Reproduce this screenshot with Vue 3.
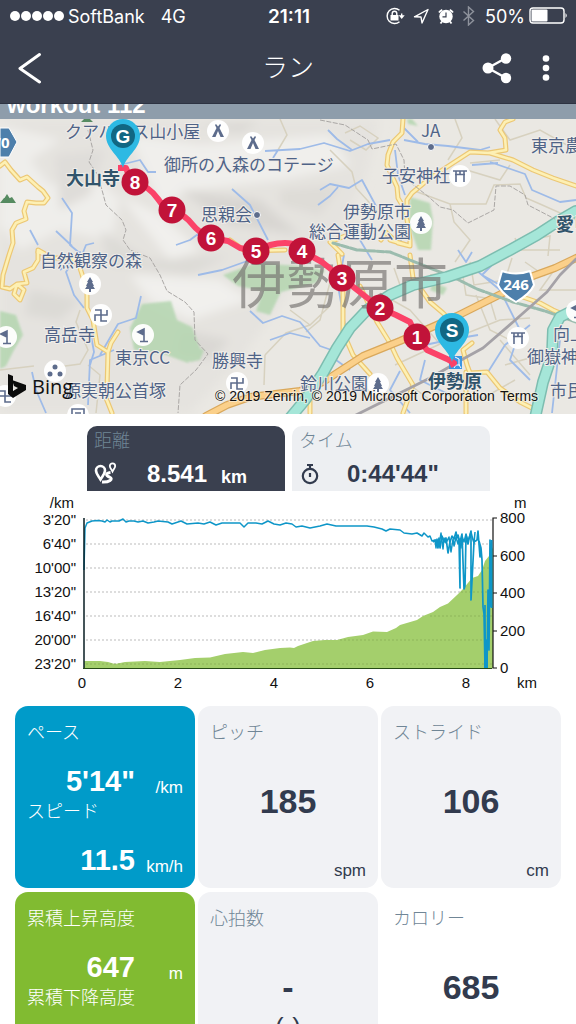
<script setup>
const kilometres = [
  { n: 1, x: 417, y: 337 },
  { n: 2, x: 380, y: 308 },
  { n: 3, x: 342, y: 278 },
  { n: 4, x: 302, y: 251 },
  { n: 5, x: 256, y: 251 },
  { n: 6, x: 211, y: 238 },
  { n: 7, x: 172, y: 210 },
  { n: 8, x: 135, y: 182 },
]

const places = [
  { t: 'クアハウス山小屋', x: 65, y: 138 },
  { t: '御所の入森のコテージ', x: 164, y: 171 },
  { t: '思親会', x: 201, y: 221 },
  { t: '伊勢原市', x: 343, y: 218 },
  { t: '総合運動公園', x: 309, y: 238 },
  { t: 'JA', x: 421, y: 137 },
  { t: '子安神社', x: 382, y: 182 },
  { t: '東京農大', x: 531, y: 152 },
  { t: '自然観察の森', x: 40, y: 267 },
  { t: '高岳寺', x: 44, y: 341 },
  { t: '東京CC', x: 115, y: 364 },
  { t: '源実朝公首塚', x: 64, y: 397 },
  { t: '勝興寺', x: 212, y: 367 },
  { t: '鈴川公園', x: 300, y: 390 },
  { t: '向上', x: 553, y: 340 },
  { t: '御嶽神社', x: 527, y: 363 },
  { t: '市民', x: 550, y: 397 },
]

const towns = [
  { t: '大山寺', x: 66, y: 185 },
  { t: '愛甲', x: 556, y: 231 },
  { t: '伊勢原', x: 428, y: 388 },
]

const pois = [
  { k: 'tent', x: 218, y: 131 },
  { k: 'tent', x: 253, y: 143 },
  { k: 'torii', x: 460, y: 176 },
  { k: 'tree', x: 421, y: 223 },
  { k: 'tree', x: 90, y: 284 },
  { k: 'manji', x: 101, y: 315 },
  { k: 'golf', x: 143, y: 335 },
  { k: 'golf', x: 6, y: 337 },
  { k: 'dots', x: 55, y: 371 },
  { k: 'manji', x: 5, y: 396 },
  { k: 'museum', x: 78, y: 415 },
  { k: 'manji', x: 237, y: 383 },
  { k: 'tree', x: 378, y: 384 },
  { k: 'torii', x: 518, y: 338 },
  { k: 'golf', x: 577, y: 311 },
]

const paceTicks = ['3\'20"', '6\'40"', '10\'00"', '13\'20"', '16\'40"', '20\'00"', '23\'20"']
const heightTicks = [
  { t: 800, y: 518 },
  { t: 600, y: 556 },
  { t: 400, y: 593 },
  { t: 200, y: 631 },
  { t: 0, y: 668 },
]
const kmTicks = [
  { t: 0, x: 82 },
  { t: 2, x: 178 },
  { t: 4, x: 274 },
  { t: 6, x: 370 },
  { t: 8, x: 466 },
]

const tiles = [
  { tone: 'blue', pair: [{ label: 'ペース', value: '5\'14"', unit: '/km' }, { label: 'スピード', value: '11.5', unit: 'km/h' }] },
  { tone: 'grey', label: 'ピッチ', value: '185', unit: 'spm' },
  { tone: 'grey', label: 'ストライド', value: '106', unit: 'cm' },
  { tone: 'green', pair: [{ label: '累積上昇高度', value: '647', unit: 'm' }, { label: '累積下降高度', value: '', unit: '' }] },
  { tone: 'grey', label: '心拍数', value: '-', sub: '(-)' },
  { tone: 'plain', label: 'カロリー', value: '685' },
]
</script>

<template>
  <div class="app">
    <header class="top">
      <div class="status">
        <div class="status-side">
          <span class="signal"><i v-for="n in 5" :key="n"></i></span>
          <span class="carrier">SoftBank</span>
          <span>4G</span>
        </div>
        <span class="clock">21:11</span>
        <div class="status-side status-right">
          <svg width="90" height="20" viewBox="0 0 90 20" fill="none" stroke="#fff" stroke-width="1.4" aria-hidden="true">
            <path d="M14.500 4.300A7.500 7.500 0 1 0 14.500 15.700M16.700 7.500V10" />
            <path d="M13.700 9.300h6l-3 3.600z" fill="#fff" stroke="none" />
            <rect x="5.500" y="9" width="8" height="5.500" fill="#fff" stroke="none" />
            <path d="M7.200 9V7.500a2.300 2.300 0 0 1 4.600 0V9" />
            <path d="M29.500 10.800L43 3.500L37 17L36 11z" stroke-linejoin="round" />
            <circle cx="61" cy="10.500" r="6.700" fill="#fff" stroke="none" />
            <path d="M54 6.500A7 7 0 0 1 57.300 3.900M68 6.500a7 7 0 0 0-3.300-2.600M57 15.500l-1.500 2M65 15.500l1.500 2" stroke-width="1.800" />
            <path d="M61 6.500v4.300h-3.500" stroke="#3a404f" stroke-width="1.200" />
            <path d="M78.500 5.500l10 9-5 4.500V1l5 4.500-10 9" stroke="#8e929c" />
          </svg>
          <span class="percent">50%</span>
          <svg width="39" height="18" viewBox="0 0 39 18" aria-hidden="true">
            <rect x="1" y="1" width="34" height="15" rx="3" fill="none" stroke="#fff" stroke-width="1.400" />
            <rect x="2.500" y="2.500" width="16" height="12" rx="1" fill="#fff" />
            <path d="M36.500 6q2.500 2.500 0 5z" fill="#fff" />
          </svg>
        </div>
      </div>
      <nav class="nav">
        <button class="icon-btn" aria-label="戻る">
          <svg width="24" height="34" viewBox="0 0 24 34" fill="none" stroke="#fff" stroke-width="3" stroke-linecap="round" stroke-linejoin="round"><path d="M21.500 3.500L2 17.500L21.500 31" /></svg>
        </button>
        <h1>ラン</h1>
        <div class="nav-right">
          <button class="icon-btn" aria-label="共有">
            <svg width="30" height="32" viewBox="0 0 30 32" fill="#fff">
              <path d="M24 6L6 16L24 26" fill="none" stroke="#fff" stroke-width="2.400" />
              <circle cx="6" cy="16" r="5.500" /><circle cx="24" cy="6.500" r="5.200" /><circle cx="24" cy="26" r="5.200" />
            </svg>
          </button>
          <button class="icon-btn" aria-label="メニュー">
            <svg width="8" height="28" viewBox="0 0 8 28" fill="#fff"><circle cx="4" cy="4.500" r="3.300" /><circle cx="4" cy="14" r="3.300" /><circle cx="4" cy="23.500" r="3.300" /></svg>
          </button>
        </div>
      </nav>
    </header>

    <main class="body">
      <div class="workout"><span>workout 112</span></div>

      <svg class="map" viewBox="0 119 576 295" role="img" aria-label="コースマップ">
        <defs>
          <filter id="soft" x="-20%" y="-20%" width="140%" height="140%"><feGaussianBlur stdDeviation="5" /></filter>
          <filter id="edge"><feGaussianBlur stdDeviation="1" /></filter>
        </defs>
        <rect y="119" width="576" height="295" fill="#eae8e3" />
        <g filter="url(#soft)">
          <path d="M0 119H380L365 180L330 250L290 290L240 360L190 413H0z" fill="#e5e3df" />
          <path d="M0 125L60 140L30 160L50 185L90 170L120 200L110 240L60 230L20 250L0 225z" fill="#efeeeb" />
          <path d="M130 135L200 145L330 135L350 165L280 180L190 190L160 205z" fill="#f0efec" />
          <path d="M55 155L105 150L90 195L60 210z" fill="#dfddd9" />
          <path d="M180 190L260 200L300 235L230 225z" fill="#d8d6d2" />
          <path d="M120 195L160 215L200 250L170 260z" fill="#f1f0ed" />
          <path d="M100 230L150 260L230 255L190 275L110 265z" fill="#dddbd7" />
          <path d="M130 275L220 280L250 300L190 320L150 300z" fill="#f1f0ed" />
          <path d="M30 290L80 300L60 320L25 315z" fill="#dcdad6" />
          <path d="M180 330L230 340L210 360L175 355z" fill="#dad8d4" />
          <path d="M200 125L260 121L240 132z" fill="#d9d7d3" />
          <path d="M280 190L340 185L320 215L280 205z" fill="#dedcd7" />
        </g>
        <g fill="#b4d6b0" opacity=".85" filter="url(#edge)">
          <path d="M142 304L171 301L177 320L192 327L200 348L188 363L164 354L134 350L130 328z" />
          <path d="M0 311L16 315L23 335L14 350L6 366L0 369z" />
          <path d="M223 275L256 263L300 266L325 270L316 283L281 292L270 315L256 311L263 291L238 286z" />
          <path d="M410 197L430 203L433 220L431 250L418 250L409 225z" />
          <path d="M190 345L204 350L200 360L190 362zM407 119H412L418 126L408 124z" />
          <path d="M433 282L447 288L443 295L430 290z" />
        </g>
        <g fill="none" stroke="#d7d1bf" stroke-width="1.500">
          <path d="M280 119L287 135L278 150M330 150L352 172L356 188L378 212M345 133L360 126L378 138L366 150L350 140" />
          <path d="M412 190L450 204L486 204L494 185L520 184L526 198L540 204L576 220M450 204L454 222L470 240L455 262M460 168L500 180L510 165M500 160L470 163M495 119L510 140L540 130L576 150M455 119L462 138L448 160" />
          <path d="M80 310L76 322L88 350L80 364L50 368M88 365L100 375L96 413M0 370L34 366M265 355L286 333L310 325L330 306M310 325L290 310M265 355L264 385M332 275L320 320L306 332M470 262L474 285L505 280L512 258M430 275L462 270L466 295L486 298M392 300L410 310L440 344M395 365L440 344L500 320L530 318M476 295L490 330L520 345M490 300L496 320M505 365L540 355M410 385L430 400M480 400L515 380M560 262L540 290L576 290M500 340L530 375M400 285L394 268M525 262L545 276M515 238L520 250L560 250M516 242L550 236L548 256" />
        </g>
        <g fill="none" stroke="#9ebbe8" stroke-width="1.800" stroke-linejoin="round">
          <path d="M265 151L300 149L324 143L350 151L368 144L390 140M273 158L278 150M328 130L337 139L352 150M320 190L330 184L349 188L362 180L376 206M318 205L330 196L338 187" />
          <path d="M62 198L72 213L70 245L82 255L86 245L94 243M60 270L72 262L80 252L66 272L74 295L84 308M90 330L94 352L90 365M141 296L136 318L118 324L100 355M88 405L90 360L114 350M32 372L36 390L46 413M198 275L222 270L250 260M250 311L263 323L282 316L300 322L320 346L340 353M270 340L290 333L310 338M232 189L250 205L268 240M176 245L190 240L198 234L215 246M120 165L140 160L148 172L156 172M30 230L38 245M56 231L72 246" />
          <path d="M404 140L425 144L448 146L480 150L490 147M404 128L418 142M395 150L398 175L405 195M490 162L525 174L532 190L560 202L576 200M472 165L498 163M344 255L338 286L346 330L336 360L350 370M470 265L500 290L520 330L510 360L530 380M425 345L448 340L478 335M530 325L505 345L488 372M560 340L552 413M360 240L372 260M398 230L402 245M400 371L390 390L410 413M425 360L420 380L450 395M458 250L466 262L472 252M495 262L482 275L500 285" />
        </g>
        <g fill="none" stroke-linejoin="round" stroke-linecap="round">
          <g v-for="pass in [{ c: '#ecc774', w: 5 }, { c: '#fdf0b4', w: 2.6 }]" :key="pass.w" :stroke="pass.c" :stroke-width="pass.w">
            <path d="M0 166L5 162L11 170L20 180L27 177L38 187L43 191L48 198L44 203L36 203L27 202L24 211L26 219L16 223L12 230L13 243L9 255L3 275L2 287L10 289L17 284L24 290L20 300L14 294L17 284L27 283L24 272L33 268L38 260L38 250L45 254" />
            <path d="M38 252L55 258L72 258L80 268L87 290L87 308L93 320L97 345L108 352L107 388L106 398L112 413M118 332L111 343L108 352" />
            <path d="M403 119L402 133L393 142L388 155L387 165L397 187L398 198L405 210L408 225L410 240L410 246L398 243L385 232M390 240L410 246M386 232L381 240" />
            <path d="M407 210L407 200L412 193L430 178L453 163L470 152L490 153L513 160L533 170L553 178L576 186M488 153L506 150L505 138L500 130L505 122L513 119" />
            <path d="M342 254L330 242L345 236M230 240L245 251L285 250M338 255L343 285L343 332L353 355L370 374M360 286L377 322L390 343L397 358L413 385L403 413M410 255L413 278L430 302L443 313L460 330" />
            <path d="M472 343L463 350L467 365L470 373L487 372L500 388L520 402L538 411M540 303L553 310L576 320M466 372L466 413M310 395L310 413M514 294L540 303" />
          </g>
          <path d="M576 258L555 268L533 276L503 293L457 316L430 328L400 341L363 356L323 382L300 391L250 397L227 405L206 416" stroke="#d9a85c" stroke-width="8" />
          <path d="M576 258L555 268L533 276L503 293L457 316L430 328L400 341L363 356L323 382L300 391L250 397L227 405L206 416" stroke="#fbd08a" stroke-width="5.500" />
          <path d="M333 243L357 250L390 252L430 268L457 279L477 289L513 302L545 311L576 322" stroke="#9bbcae" stroke-width="3" stroke-dasharray="7 2" />
          <path d="M576 211L557 222L537 235L510 250L480 266L447 277L413 285L390 295L367 310L350 328L337 348L323 373L305 400L290 418M576 309L560 317L553 330L552 355L543 382L535 418" stroke="#7dbdb0" stroke-width="12" />
          <path d="M576 211L557 222L537 235L510 250L480 266L447 277L413 285L390 295L367 310L350 328L337 348L323 373L305 400L290 418M576 309L560 317L553 330L552 355L543 382L535 418" stroke="#a5e6d8" stroke-width="9" />
          <path d="M576 259L560 275L547 292L513 322L483 348L463 359L430 378L380 403L350 418" stroke="#a5a2a7" stroke-width="2.800" />
        </g>
        <g fill="none" stroke="#aaa7a5" stroke-width="1" stroke-dasharray="5 1.500">
          <path d="M88 130L93 150L89 162L98 175L106 205L122 220L126 230L123 240L130 250L150 258L160 275L167 291L185 302L194 312L195 340L208 354L196 370L180 385L178 413" />
          <path d="M320 120L345 125L368 140L372 149L396 144L404 160L405 178L430 198L440 207L453 210L468 223L494 210L496 186L510 186L525 195L528 205L555 219" />
        </g>
        <path d="M2 202L7 194L12 202zM81 122L87 116L93 122zM0 203L4 198L8 199L12 197L16 203z" fill="#568b61" />
        <path d="M0 128H9L17 142L9 157H0z" fill="#4d7fab" stroke="#fff" />
        <text class="shield" x="1" y="148" text-anchor="middle">70</text>

        <text class="city" x="232" y="304">伊勢原市</text>

        <g v-for="(p, i) in pois" :key="i" :transform="`translate(${p.x} ${p.y})`">
          <circle r="11" fill="#fff" opacity=".95" />
          <g fill="none" stroke="#5d6c8c" stroke-width="1.600">
            <path v-if="p.k === 'tent'" d="M-2-7L0-4.500L2-7L3-6L1.500-3L6 6H2.500L0 0L-2.500 6H-6L-1.500-3L-3-6z" fill="#5d6c8c" stroke="none" />
            <path v-else-if="p.k === 'torii'" d="M-7-5H7M-5-1.500H5M-4-5V6M4-5V6M0-5v3" />
            <path v-else-if="p.k === 'tree'" d="M0-7L3-2H2L4 2H3L5 5H1V8H-1V5H-5L-3 2H-4L-2-2H-3z" fill="#5d6c8c" stroke="none" />
            <path v-else-if="p.k === 'manji'" d="M6-5V0H-6V6M-6-5H0V6H6" />
            <path v-else-if="p.k === 'golf'" d="M1 6V-6L-5-3L1 0M-3 6.500H5" fill="#5d6c8c" />
            <g v-else-if="p.k === 'dots'" fill="#5d6c8c" stroke="none"><circle cy="-4" r="2.500" /><circle cx="-5" cy="3" r="2.500" /><circle cx="5" cy="3" r="2.500" /></g>
            <path v-else d="M-6 3V-6H6V3M-3-2H3M-3 1H3" />
          </g>
        </g>
        <circle cx="431" cy="147" r="3.500" class="dot" />
        <circle cx="257" cy="215" r="3.500" class="dot" />

        <text v-for="p in places" :key="p.t + p.x" class="place" :x="p.x" :y="p.y">{{ p.t }}</text>
        <text v-for="p in towns" :key="p.t" class="town" :x="p.x" :y="p.y">{{ p.t }}</text>

        <path d="M502 271Q516 276 530 271L534 285Q530 294 516 302Q502 294 498 285z" fill="#4d7fab" stroke="#fff" stroke-width="2" stroke-linejoin="round" />
        <text class="shield" x="516" y="290" text-anchor="middle">246</text>
        <rect x="449" y="356" width="13" height="13" fill="#3b97e3" />
        <path d="M455 357l4 2v6l2 3M454 368l2-3h4" stroke="#fff" fill="none" />

        <path d="M118 168L126 168L129 176L135 182Q150 187 158 199T172 210Q185 215 192 224T211 238L228 241L240 248L256 251Q270 243 285 243T302 251L322 262L342 278L380 308L396 315L410 322L417 337L427 350L447 359L454 363L450 365" fill="none" stroke="#fb4268" stroke-width="6" stroke-linejoin="round" />
        <g v-for="k in kilometres" :key="k.n">
          <circle :cx="k.x" :cy="k.y" r="13.500" fill="#c11339" />
          <text class="mark" :x="k.x" :y="k.y + 7" text-anchor="middle">{{ k.n }}</text>
        </g>
        <g v-for="pin in [{ t: 'G', x: 123, y: 136 }, { t: 'S', x: 452, y: 330 }]" :key="pin.t" :transform="`translate(${pin.x} ${pin.y})`">
          <path d="M0 32C-3 20-17 13-17 0A17 17 0 0 1 17 0C17 13 3 20 0 32z" fill="#2db9e3" />
          <circle r="12" fill="#116783" />
          <text class="mark" y="7" text-anchor="middle">{{ pin.t }}</text>
        </g>

        <path d="M8 374L13 376V391L18 388L14 386L12 380L26 385V390L13 398L8 394z" fill="#0b0b0b" />
        <text class="bing" x="32" y="394">Bing</text>
        <text class="credit" x="215" y="401">© 2019 Zenrin, © 2019 Microsoft Corporation</text>
        <a href="#terms"><text class="credit" x="500" y="401">Terms</text></a>
      </svg>

      <section class="totals">
        <div class="total dark">
          <span class="total-label">距離</span>
          <div class="total-row">
            <svg width="24" height="24" viewBox="0 0 24 24" fill="none" stroke="#fff" aria-hidden="true">
              <path d="M6.500 17.500C4.500 14 2 11.500 2 8.500A4.500 4.500 0 0 1 11 8.500C11 11.500 8.500 14 6.500 17.500z" stroke-width="2.600" />
              <path d="M18.500 9.500C17.500 7.500 15.800 6 15.800 4A2.700 2.700 0 0 1 21.200 4C21.200 6 19.500 7.500 18.500 9.500z" stroke-width="1.800" />
              <path d="M16.500 10.500C11 11 12 14 15.500 15C20 17 15 20.500 8 20" stroke-width="3" />
            </svg>
            <strong>8.541</strong><b>km</b>
          </div>
        </div>
        <div class="total light">
          <span class="total-label">タイム</span>
          <div class="total-row">
            <svg width="24" height="24" viewBox="0 0 24 24" fill="none" stroke="#323b4e" stroke-width="2.200" aria-hidden="true">
              <circle cx="11" cy="14" r="7.200" /><path d="M8 3H14M11 3V7M11 11V15" />
            </svg>
            <strong>0:44'44"</strong>
          </div>
        </div>
      </section>

      <svg class="chart" viewBox="0 491 576 215" role="img" aria-label="ペースと高度のグラフ">
        <g stroke="#bcbcbc" stroke-width="1.200" stroke-dasharray="2 2">
          <line v-for="n in 7" :key="n" x1="86" x2="492" :y1="496 + n * 24" :y2="496 + n * 24" />
        </g>
        <path d="M84 661L100 661L108 662L115 664L125 662L145 661L160 662L170 661L180 660L195 658L210 657.500L225 654L243 652L253 653L265 650L280 648L290 647.500L294 648L298 646L313 641L325 640L337 640L348 637L363 635L373 631.500L387 632L396 628L400 625L417 620L423 616L433 612L440 607L448 603.500L457 595L463 589L472 578L478 576L482 570L485 561L489 556L493 547V668H84z" fill="#a4cf6c" />
        <g stroke="#789c4b" opacity=".5" stroke-dasharray="2 2"><path d="M86 664H492M340 640H492M430 616H492M461 592H492M483 568H492" /></g>
        <path d="M84 570L85 528L87 523L92 521L98 520.500L102 521L105 522L107 520L110 522L112 521L119 521L123 519L126 522L129 521L134 521L138 522L143 521L148 523L154 522L158 521L168 522L172 524L181 521L187 524L198 523L204 524L210 522L216 525L222 523L240 523L244 527L248 523L256 523L262 524L268 521L274 524L280 525L286 523L292 524L296 527L302 526L310 528L320 526L327 524L336 526L350 526L367 526L374 527L382 529L386 531L390 529L400 530L404 533L412 534L417 533L422 536L424 533L428 537L430 536L432 541L435 540L436 548L437 539L439 546L441 533L443 549L444 538L446 543L449 537L451 552L453 539L454 546L456 537L458 544L459 539L461 548L462 536L464 542L466 534L468 541L470 535L471 532L473 540L474 543L475 532" fill="none" stroke="#0e96c8" stroke-width="1.500" stroke-linejoin="round" />
        <path d="M433 542L436 540L438 548L439 538L440 548L442 536L444 542L446 538L448 553L450 542L452 536L454 539L456 532L457 538L458 535L459 539L460 588V542L462 534L464 589L465 586L466 535L468 544L469 539L471 531L471 600L474 542L477 540L478 531L480 557L479 541L481 548L482 560L483 607L484 614L485 667V605M485 668L486 640L487 667L488 590L489 650L490 540L491 607" fill="none" stroke="#0e96c8" stroke-width="1.700" stroke-linejoin="round" />
        <path d="M484 668V640L485 615L486 640L488 643V668z" fill="#0e96c8" />
        <path d="M84 518V668.500" stroke="#071c22" stroke-width="1.500" />
        <path d="M83 668.500H492" stroke="#264b15" stroke-width="1.200" />
        <path d="M497 518H493V668H497M493 556H497M493 593H497M493 631H497" fill="none" stroke="#111" stroke-width="1.200" />
        <path d="M490 560L491.500 540V608" fill="none" stroke="#0e96c8" stroke-width="2" />
        <g class="axis">
          <text x="74" y="508" text-anchor="end">/km</text>
          <text v-for="(t, i) in paceTicks" :key="t" x="76" :y="525 + i * 24" text-anchor="end">{{ t }}</text>
          <text x="514" y="508">m</text>
          <text v-for="t in heightTicks" :key="t.t" x="500" :y="t.y + 5">{{ t.t }}</text>
          <text v-for="t in kmTicks" :key="t.t" :x="t.x" y="688" text-anchor="middle">{{ t.t }}</text>
          <text x="517" y="688">km</text>
        </g>
      </svg>

      <section class="tiles">
        <article v-for="(tile, i) in tiles" :key="i" class="tile" :class="tile.tone">
          <template v-if="tile.pair">
            <div v-for="m in tile.pair" :key="m.label">
              <div class="tile-label">{{ m.label }}</div>
              <div class="pair-row"><strong>{{ m.value }}</strong><span class="unit">{{ m.unit }}</span></div>
            </div>
          </template>
          <template v-else>
            <div class="tile-label">{{ tile.label }}</div>
            <strong class="big">{{ tile.value }}</strong>
            <span v-if="tile.sub" class="sub">{{ tile.sub }}</span>
            <span v-if="tile.unit" class="unit tile-unit">{{ tile.unit }}</span>
          </template>
        </article>
      </section>
    </main>
  </div>
</template>

<style>
body {
  background: #fff;
}
</style>

<style scoped>
.app {
  height: 100vh;
  display: flex;
  flex-direction: column;
  overflow: hidden;
  font-family: "Liberation Sans", "Noto Sans CJK JP", sans-serif;
  background: #fff;
  color: #323b4e;
}
.top {
  flex: none;
  background: #3a404f;
  color: #fff;
  border-bottom: 1px solid #2d3342;
}
.status {
  display: grid;
  grid-template-columns: 1fr auto 1fr;
  align-items: center;
  height: 32px;
  padding: 0 8px 0 10px;
  font-family: Inter, "Noto Sans", sans-serif;
  font-size: 18px;
}
.status-side {
  display: flex;
  align-items: center;
}
.carrier {
  margin: 0 16px 0 4px;
}
.status-right {
  justify-content: flex-end;
}
.percent {
  margin: 0 4px 0 10px;
}
.clock {
  font-size: 19px;
  font-weight: 600;
}
.signal {
  display: flex;
  gap: 1px;
}
.signal i {
  width: 10px;
  height: 10px;
  border-radius: 50%;
  background: #fff;
}
.nav {
  display: grid;
  grid-template-columns: 1fr auto 1fr;
  align-items: center;
  height: 71px;
  padding: 0 18px;
}
.nav h1 {
  margin: 0;
  font-size: 26px;
  line-height: 36px;
  font-weight: 300;
}
.nav-right {
  display: flex;
  justify-content: flex-end;
  align-items: center;
  gap: 30px;
  padding-right: 8px;
}
.icon-btn {
  display: flex;
  justify-self: start;
  padding: 0;
  border: 0;
  background: none;
}
.body {
  flex: 1;
  min-height: 0;
  overflow: auto;
  scrollbar-width: none;
}
.workout {
  display: flex;
  align-items: flex-end;
  height: 15px;
  overflow: hidden;
  padding-left: 7px;
  background: #8e9dab;
  color: #fff;
  font-size: 24px;
  font-weight: 700;
  line-height: 28px;
}
.map,
.chart {
  display: block;
  width: 100%;
  height: auto;
}
.place {
  font: 400 17px "Noto Sans CJK JP", sans-serif;
  fill: #4f6387;
  stroke: #f0eeea;
  stroke-width: 2px;
  paint-order: stroke;
}
.town {
  font: 700 18px "Noto Sans CJK JP", sans-serif;
  fill: #31546b;
  stroke: #f0eeea;
  stroke-width: 2px;
  paint-order: stroke;
}
.city {
  font: 400 54px "Noto Sans CJK JP", sans-serif;
  fill: #74716f;
  opacity: 0.65;
}
.dot {
  fill: #5d6c8c;
  stroke: #fff;
}
.shield {
  font: 700 15px "Open Sans", sans-serif;
  fill: #fff;
}
.mark {
  font: 700 19px "Liberation Sans", sans-serif;
  fill: #fff;
}
.bing {
  font: 400 20px "Open Sans", sans-serif;
  fill: #111;
}
.credit {
  font: 400 14px "Liberation Sans", sans-serif;
  fill: #111;
  stroke: #f6f3ea;
  stroke-width: 2px;
  stroke-opacity: 0.6;
  paint-order: stroke;
}
.totals {
  display: grid;
  grid-template-columns: 1fr 1fr;
  gap: 7px;
  padding: 12px 86px 0 87px;
}
.total {
  height: 65px;
  border-radius: 10px 10px 0 0;
  padding: 3px 7px 0;
  box-sizing: border-box;
}
.total.dark {
  background: #3a404f;
  color: #fff;
}
.total.light {
  background: #edeff2;
}
.total-label {
  display: block;
  font-size: 18px;
  line-height: 24px;
  font-weight: 300;
  color: #708696;
}
.total-row {
  display: flex;
  align-items: center;
  line-height: 28px;
  padding-top: 7px;
}
.total-row strong {
  font-size: 24px;
  margin-left: 29px;
}
.total-row b {
  font-size: 18px;
  line-height: 22px;
  margin-left: 14px;
  align-self: flex-end;
}
.light .total-row strong {
  margin-left: 24px;
}
.axis {
  font: 400 15px "Liberation Sans", sans-serif;
  fill: #111;
}
.tiles {
  display: grid;
  grid-template-columns: repeat(3, 1fr);
  gap: 4px 3px;
  padding: 0 15px 15px;
}
.tile {
  display: flex;
  flex-direction: column;
  min-height: 182px;
  box-sizing: border-box;
  padding: 15px 12px 5px;
  border-radius: 13px;
}
.blue {
  background: #009bc9;
  color: #fff;
}
.green {
  background: #81bb31;
  color: #fff;
}
.grey {
  background: #f1f2f5;
}
.tile-label {
  font-size: 18px;
  line-height: 24px;
  font-weight: 300;
}
.grey .tile-label,
.plain .tile-label {
  color: #708696;
}
.pair-row {
  display: flex;
  justify-content: flex-end;
  align-items: flex-end;
  margin-top: 17px;
  line-height: 38px;
}
.pair-row strong {
  font-size: 29px;
}
.unit {
  font-size: 17px;
  line-height: 24px;
}
.pair-row .unit {
  width: 48px;
  text-align: right;
}
.big {
  margin-top: 36px;
  font-size: 34px;
  line-height: 40px;
  text-align: center;
}
.sub {
  font-size: 26px;
  line-height: 40px;
  text-align: center;
}
.tile-unit {
  margin-top: auto;
  text-align: right;
}
</style>
